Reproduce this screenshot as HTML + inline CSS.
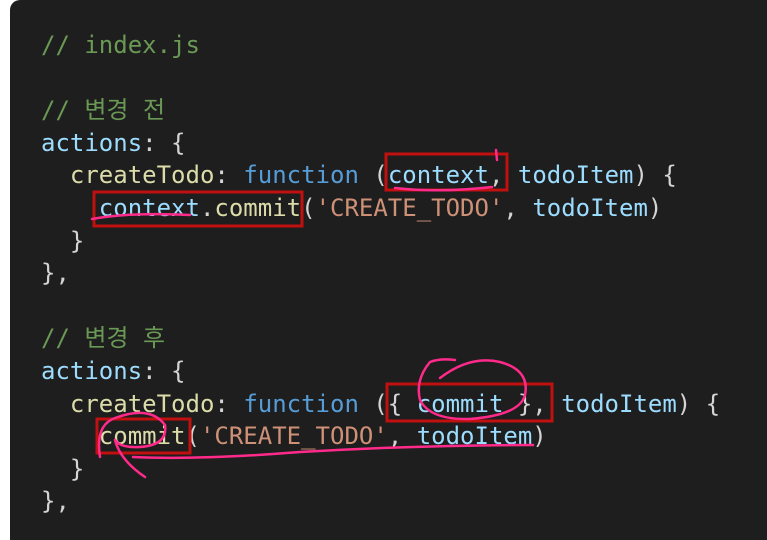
<!DOCTYPE html>
<html><head><meta charset="utf-8"><style>
html,body{margin:0;padding:0;background:#fff;width:767px;height:531px;overflow:hidden}
.p{position:absolute;left:10px;top:0;width:770px;height:540px;background:#1e1e1e;border-radius:10px 0 0 0}
pre{position:absolute;left:41px;top:29px;margin:0;font-family:"DejaVu Sans Mono","Noto Sans CJK KR",monospace;font-size:24px;line-height:32.6px;color:#d4d4d4}
.c{color:#6a9955}.k{color:#9cdcfe}.f{color:#dcdcaa}.b{color:#569cd6}.s{color:#ce9178}
svg{position:absolute;left:0;top:0}
</style></head><body>
<div class="p"></div>
<pre><span class="c">// index.js</span>

<span class="c">// 변경 전</span>
<span class="k">actions</span>: {
  <span class="f">createTodo</span>: <span class="b">function</span> (<span class="k">context</span>, <span class="k">todoItem</span>) {
    <span class="k">context</span>.<span class="f">commit</span>(<span class="s">'CREATE_TODO'</span>, <span class="k">todoItem</span>)
  }
},

<span class="c">// 변경 후</span>
<span class="k">actions</span>: {
  <span class="f">createTodo</span>: <span class="b">function</span> ({ <span class="k">commit</span> }, <span class="k">todoItem</span>) {
    <span class="f">commit</span>(<span class="s">'CREATE_TODO'</span>, <span class="k">todoItem</span>)
  }
},</pre>
<svg width="767" height="531" fill="none">
<g stroke="#c01010" stroke-width="3">
<rect x="386" y="154" width="121" height="36"/>
<rect x="94" y="192" width="208" height="34"/>
<rect x="387" y="384" width="165" height="37"/>
<rect x="97" y="419" width="93" height="34"/>
</g>
<g stroke="#ff2a8a" stroke-width="2.5" stroke-linecap="round">
<path d="M395 188 Q440 193 492 187"/>
<path d="M496 150 L497 160"/>
<path d="M92 219 Q130 212 190 215"/>
<path d="M440 378 Q470 355 500 362 Q530 370 525 395 Q520 415 470 419 Q430 420 420 400 Q415 380 430 362 Q440 358 455 360"/>
<path d="M100 457 Q95 425 115 418 Q150 405 165 425 Q168 445 140 447 Q120 448 115 440"/>
<path d="M115 440 Q120 460 145 477"/>
<path d="M133 457 Q200 460 300 452 Q420 445 533 445"/>
</g>
</svg>
</body></html>
